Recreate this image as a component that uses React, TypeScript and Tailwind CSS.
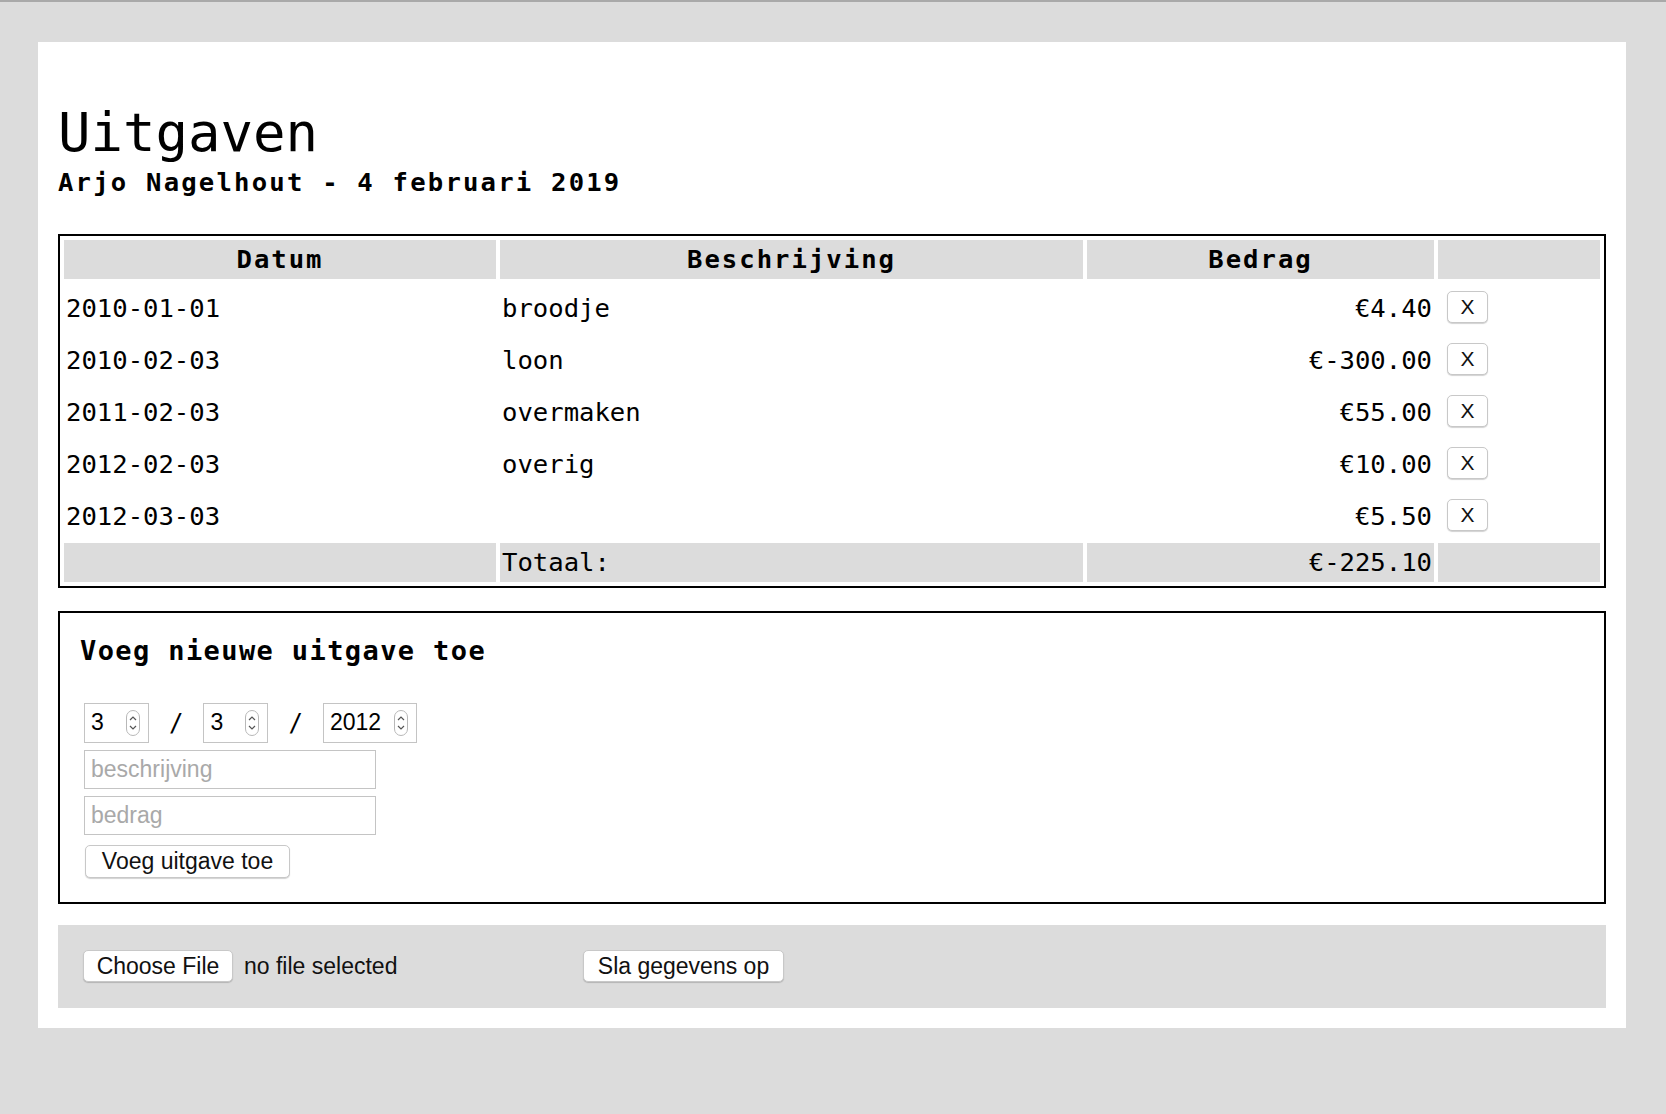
import React from "react";

type Expense = {
  date: string;
  description: string;
  amount: string;
};

const expenses: Expense[] = [
  { date: "2010-01-01", description: "broodje", amount: "€4.40" },
  { date: "2010-02-03", description: "loon", amount: "€-300.00" },
  { date: "2011-02-03", description: "overmaken", amount: "€55.00" },
  { date: "2012-02-03", description: "overig", amount: "€10.00" },
  { date: "2012-03-03", description: "", amount: "€5.50" },
];

const mono = "font-['DejaVu_Sans_Mono',monospace]";
const sans = "font-['Liberation_Sans',Arial,sans-serif]";

function Spinner() {
  return (
    <svg width="14" height="26" viewBox="0 0 14 26" className="shrink-0">
      <rect x="0.5" y="0.5" width="13" height="25" rx="6.5" fill="#fff" stroke="#b8b8b8" />
      <path d="M4 10 L7 7 L10 10" fill="none" stroke="#555" strokeWidth="1.2" />
      <path d="M4 16 L7 19 L10 16" fill="none" stroke="#555" strokeWidth="1.2" />
    </svg>
  );
}

function NumberField({ value, width }: { value: string; width: string }) {
  return (
    <div
      className={`flex h-[40px] items-center justify-between border border-[#c4c4c4] bg-white pl-[6px] pr-[8px] text-[23px] text-black ${width} ${sans}`}>
      <span>{value}</span>
      <Spinner />
    </div>
  );
}

function PlainButton({ children, className = "" }: { children: React.ReactNode; className?: string }) {
  return (
    <button
      type="button"
      className={`flex items-center justify-center rounded-[5px] border border-[#c8c8c8] bg-white text-[23px] text-[#111] shadow-[0_1px_1px_rgba(0,0,0,0.18)] ${sans} ${className}`}>
      {children}
    </button>
  );
}

export default function App() {
  return (
    <div className="min-h-[1114px] border-t-2 border-[#a9a9a9] bg-[#dcdcdc] pt-[40px]">
      <main className="ml-[38px] mr-[40px] bg-white px-[20px] pb-[20px] pt-[64px]">
        <h1 className={`text-[54px] leading-none text-black ${mono}`}>Uitgaven</h1>
        <h2 className={`mt-[10px] text-[25.6px] font-bold leading-none tracking-[2.2px] text-black ${mono}`}>
          Arjo Nagelhout - 4 februari 2019
        </h2>

        <table
          className={`mt-[38px] w-full border-separate border-spacing-1 border-2 border-black text-[25.6px] leading-[1.4] text-black ${mono}`}>
          <thead>
            <tr>
              <th className="h-[39px] w-[432px] bg-[#dcdcdc] pt-[2px] font-bold tracking-[2px]">Datum</th>
              <th className="h-[39px] w-[583px] bg-[#dcdcdc] pt-[2px] font-bold tracking-[2px]">Beschrijving</th>
              <th className="h-[39px] w-[347px] bg-[#dcdcdc] pt-[2px] font-bold tracking-[2px]">Bedrag</th>
              <th className="h-[39px] bg-[#dcdcdc]"></th>
            </tr>
          </thead>
          <tbody>
            {expenses.map((e) => (
              <tr key={e.date + e.amount}>
                <td className="h-[48px] px-[2px] pt-[4px]">{e.date}</td>
                <td className="h-[48px] px-[2px] pt-[4px]">{e.description}</td>
                <td className="h-[48px] px-[2px] pt-[4px] text-right">{e.amount}</td>
                <td className="h-[48px] pl-[9px]">
                  <PlainButton className="h-[32px] w-[41px] !text-[21px]">X</PlainButton>
                </td>
              </tr>
            ))}
            <tr>
              <td className="h-[39px] bg-[#dcdcdc]"></td>
              <td className="h-[39px] bg-[#dcdcdc] px-[2px] pt-[2px]">Totaal:</td>
              <td className="h-[39px] bg-[#dcdcdc] px-[2px] pt-[2px] text-right">€-225.10</td>
              <td className="h-[39px] bg-[#dcdcdc]"></td>
            </tr>
          </tbody>
        </table>

        <section className="mt-[23px] border-2 border-black px-[20px] pb-[24px] pt-[24px]">
          <h3 className={`text-[27px] font-bold leading-none tracking-[1.4px] text-black ${mono}`}>
            Voeg nieuwe uitgave toe
          </h3>

          <div className="mt-[39px] flex items-center">
            <div className="ml-[4px]">
              <NumberField value="3" width="w-[65px]" />
            </div>
            <span className={`mx-[20px] text-[24px] text-black ${mono}`}>/</span>
            <NumberField value="3" width="w-[65px]" />
            <span className={`mx-[20px] text-[24px] text-black ${mono}`}>/</span>
            <NumberField value="2012" width="w-[94px]" />
          </div>

          <div className="ml-[4px] mt-[7px] flex flex-col gap-[7px]">
            <div className={`flex h-[39px] w-[292px] items-center border border-[#c4c4c4] bg-white pl-[6px] text-[23px] text-[#a9a9a9] ${sans}`}>
              beschrijving
            </div>
            <div className={`flex h-[39px] w-[292px] items-center border border-[#c4c4c4] bg-white pl-[6px] text-[23px] text-[#a9a9a9] ${sans}`}>
              bedrag
            </div>
          </div>

          <PlainButton className="ml-[5px] mt-[10px] h-[33px] w-[205px]">Voeg uitgave toe</PlainButton>
        </section>

        <footer className="mt-[21px] flex h-[83px] items-center bg-[#dcdcdc] px-[25px]">
          <div className="flex w-[500px] items-center">
            <PlainButton className="h-[32px] w-[150px]">Choose File</PlainButton>
            <span className={`ml-[11px] text-[23px] text-[#111] ${sans}`}>no file selected</span>
          </div>
          <PlainButton className="h-[32px] w-[201px]">Sla gegevens op</PlainButton>
        </footer>
      </main>
    </div>
  );
}
